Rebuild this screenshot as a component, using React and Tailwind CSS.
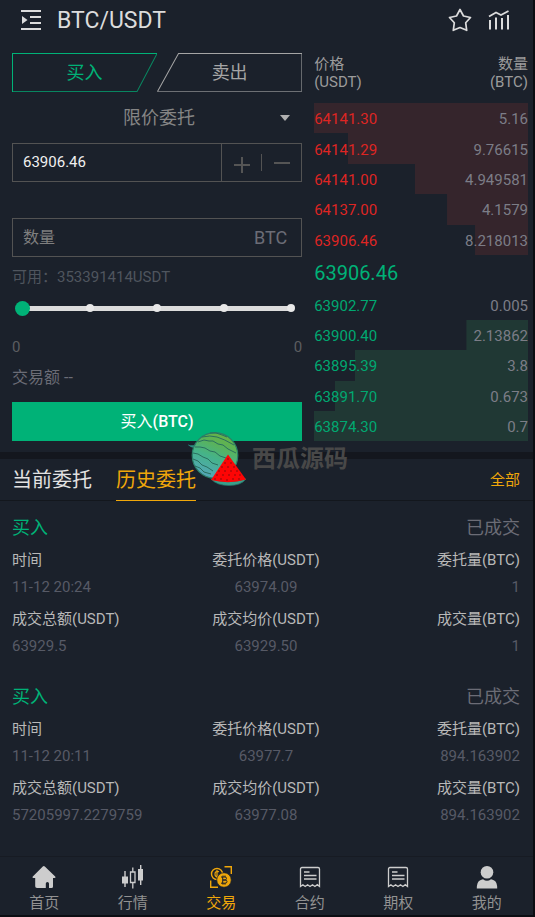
import React from "react";

const asks = [
  { price: "64141.30", amount: "5.16", depth: 100 },
  { price: "64141.29", amount: "9.76615", depth: 84 },
  { price: "64141.00", amount: "4.949581", depth: 53 },
  { price: "64137.00", amount: "4.1579", depth: 38 },
  { price: "63906.46", amount: "8.218013", depth: 25 },
];

const bids = [
  { price: "63902.77", amount: "0.005", depth: 0 },
  { price: "63900.40", amount: "2.13862", depth: 29 },
  { price: "63895.39", amount: "3.8", depth: 81 },
  { price: "63891.70", amount: "0.673", depth: 90 },
  { price: "63874.30", amount: "0.7", depth: 100 },
];

const orders = [
  {
    side: "买入",
    status: "已成交",
    fields: [
      ["时间", "11-12 20:24"],
      ["委托价格(USDT)", "63974.09"],
      ["委托量(BTC)", "1"],
      ["成交总额(USDT)", "63929.5"],
      ["成交均价(USDT)", "63929.50"],
      ["成交量(BTC)", "1"],
    ],
  },
  {
    side: "买入",
    status: "已成交",
    fields: [
      ["时间", "11-12 20:11"],
      ["委托价格(USDT)", "63977.7"],
      ["委托量(BTC)", "894.163902"],
      ["成交总额(USDT)", "57205997.2279759"],
      ["成交均价(USDT)", "63977.08"],
      ["成交量(BTC)", "894.163902"],
    ],
  },
];

const columnAlign = ["text-left", "text-center", "text-right"];

function MenuIcon() {
  return (
    <svg width="20" height="20" viewBox="0 0 20 20" fill="currentColor" aria-hidden="true">
      <path d="M0 0h20v2H0zM9 6h11v2H9zM9 12h11v2H9zM0 18h20v2H0zM1 6v8L6.500 10z" />
    </svg>
  );
}

function StarIcon() {
  return (
    <svg width="24" height="24" viewBox="0 0 24 24" fill="none" stroke="currentColor" strokeWidth="1.700" strokeLinejoin="round" aria-hidden="true">
      <path d="M12 1.500l3.500 6.500 7 1.500-4.800 5.300 1 7.500L12 19.500l-6.700 2.800 1-7.500L1.500 9.500l7-1.500z" />
    </svg>
  );
}

function ChartIcon() {
  return (
    <svg width="22" height="20" viewBox="0 0 22 20" fill="none" stroke="currentColor" aria-hidden="true">
      <path d="M1 6.500L8 2.500l5 2.500 7.500-4" strokeWidth="1.800" />
      <path d="M2 19.500V10M8 19.500V7.500M14 19.500V8M20 19.500V5" strokeWidth="2" />
    </svg>
  );
}

function HomeIcon() {
  return (
    <svg width="24" height="24" viewBox="0 0 24 24" fill="currentColor" aria-hidden="true">
      <path d="M10.800 1.500q1-.9 2 0l10.400 10q.9 1.300-.7 1.500h-1.500v8.500q0 1.500-1.500 1.500H17v-4.500q0-1.500-1.600-1.500t-1.600 1.500V23H5q-1.800 0-1.800-1.800V13H1.500q-1.600-.2-.7-1.500z" />
    </svg>
  );
}

function CandlesIcon() {
  return (
    <svg width="24" height="24" viewBox="0 0 24 24" fill="currentColor" aria-hidden="true">
      <path d="M3.300 6h1.400v5.500H7v7H4.700V22H3.300v-3.500H1v-7h2.300zM19 0h1.400v4H22v11.500h-1.600V20H19v-4.500h-2V4h2z" />
      <path d="M11.800 2.500V7M11.800 18v5.500M9.500 7h4.500v10.500H9.500z" fill="none" stroke="currentColor" strokeWidth="1.300" />
    </svg>
  );
}

function TradeIcon() {
  return (
    <svg width="24" height="24" viewBox="0 0 24 24" fill="none" stroke="currentColor" aria-hidden="true">
      <path d="M15.500 1.700h6.800V9M1.700 15.500v6.800H9" strokeWidth="1.400" />
      <circle cx="8" cy="9" r="5.500" strokeWidth="1.400" />
      <path d="M10 6.800q-4-1.300-4 2.200t3 2.200M8 5v8" strokeWidth="1.200" />
      <circle cx="15" cy="15" r="7.300" fill="currentColor" stroke="#1b212b" strokeWidth=".8" />
      <path d="M12 12h4q1.500 0 1.500 1.400T16 15h-2H16q2 0 2 1.600T16 18.200h-4M13.700 12v6.200M14 10.500v1.500M16 10.500v1.500M14 18.200v1.500M16 18.200v1.500" stroke="#1b212b" strokeWidth="1" />
    </svg>
  );
}

function ReceiptIcon() {
  return (
    <svg width="24" height="24" viewBox="0 0 24 24" fill="none" stroke="currentColor" strokeWidth="1.300" aria-hidden="true">
      <path d="M2.500 21.500V4Q2.500 2.500 4 2.500h16q1.500 0 1.500 1.500v17.500l-2.200-1.800-2.400 1.800-2.400-1.800-2.500 1.800-2.400-1.800-2.400 1.800-2.300-1.800z" />
      <path d="M6 7h5.500M6 10.500h12.500M6 14h12.500" />
    </svg>
  );
}

function UserIcon() {
  return (
    <svg width="24" height="24" viewBox="0 0 24 24" fill="currentColor" aria-hidden="true">
      <circle cx="12" cy="7.300" r="6.300" />
      <path d="M1.800 23.500q0-6.500 3-8 1.500-1 3.200-1.300 4 3 8 0 1.700.3 3.200 1.300 3 1.500 3 8z" />
    </svg>
  );
}

const navItems = [
  { label: "首页", Icon: HomeIcon },
  { label: "行情", Icon: CandlesIcon },
  { label: "交易", Icon: TradeIcon, active: true },
  { label: "合约", Icon: ReceiptIcon },
  { label: "期权", Icon: ReceiptIcon },
  { label: "我的", Icon: UserIcon },
];

function Melon() {
  return (
    <svg width="60" height="56" viewBox="0 0 60 56" aria-hidden="true">
      <defs>
        <linearGradient id="rind" x1="0.7" y1="0" x2="0.3" y2="1">
          <stop offset="0" stopColor="#6ab344" />
          <stop offset=".25" stopColor="#5cb256" />
          <stop offset=".55" stopColor="#45b389" />
          <stop offset="1" stopColor="#55a5bd" />
        </linearGradient>
      </defs>
      <path d="M-1 13q4 2 8 1l1 3q-4 1-9-4z" fill="#2b8d83" />
      <circle cx="27" cy="24.500" r="22.800" fill="url(#rind)" stroke="#2b7f68" strokeWidth="1.200" />
      <g fill="none" stroke="#2a6f5f" strokeWidth="1" strokeLinejoin="round">
        <path d="M14 6q8-2 15 0t17 8" />
        <path d="M10 11l6-2 5 1 4 0 5 3 5 1 5 4 8 4" />
        <path d="M7 16l5 0 5 1 5 3 5 1 5 4 6 2 5 4" />
        <path d="M5 22l5 1 5 3 5 2 4 4 6 2" />
        <path d="M5 28l5 2 4 4 5 2 6 4" />
        <path d="M7 35l5 2 4 4 7 2" />
        <path d="M22 2l6 0 6 2 5 2" />
      </g>
      <path d="M23 48q17 5 35 0-5 6.500-17 6.500T23 48z" fill="#39a08c" stroke="#247266" strokeWidth=".8" />
      <path d="M40 23.500L58 48.500q-17 5-35 .5z" fill="#fd0505" />
      <g fill="#5d1010">
        {[[40, 28], [37, 32], [43, 32], [34, 36], [40, 36], [46, 36], [31, 40], [37, 40], [43, 40], [49, 40], [29, 44], [35, 44], [41, 44], [47, 44], [52, 44], [27, 48], [33, 48], [39, 49], [45, 48], [51, 48]].map(
          ([x, y]) => (
            <circle key={`${x}-${y}`} cx={x} cy={y} r=".7" />
          )
        )}
      </g>
    </svg>
  );
}

function BookRows({ rows, textClass, fill }) {
  return (
    <tbody>
      {rows.map((row) => (
        <tr
          key={row.price}
          style={{ background: `linear-gradient(to left, ${fill} ${row.depth}%, transparent ${row.depth}%)` }}
        >
          <td className={`p-0 pt-[2px] ${textClass}`}>{row.price}</td>
          <td className="p-0 pt-[2px] text-right text-[#7c7d87]">{row.amount}</td>
        </tr>
      ))}
    </tbody>
  );
}

function OrderForm() {
  return (
    <form className="flex min-w-0 flex-col" onSubmit={(e) => e.preventDefault()}>
      <div className="grid h-[39px] grid-cols-2 text-lg">
        <button type="button" className="relative text-[#00b277]">
          <svg className="absolute inset-0 h-full w-full" viewBox="0 0 145 39" preserveAspectRatio="none" fill="none" stroke="currentColor" aria-hidden="true">
            <path d="M.5 39V.5H145" />
            <path d="M145 .5L125 38.500H.5" opacity=".7" />
          </svg>
          买入
        </button>
        <button type="button" className="relative text-[#a5a5a5]">
          <svg className="absolute inset-0 h-full w-full" viewBox="0 0 145 39" preserveAspectRatio="none" fill="none" stroke="currentColor" aria-hidden="true">
            <path d="M.5 38.500L21.500 .5H145" />
            <path d="M144.500 .5v38H.5" opacity=".6" />
          </svg>
          卖出
        </button>
      </div>

      <div className="grid h-[51px] items-center">
        <select
          aria-label="委托类型"
          className="col-start-1 row-start-1 w-full appearance-none bg-transparent pr-3 pl-4 text-center text-lg text-[#858585] outline-none"
        >
          <option>限价委托</option>
        </select>
        <svg className="pointer-events-none col-start-1 row-start-1 mr-3 justify-self-end text-[#b0b0b0]" width="10" height="6" viewBox="0 0 10 6" fill="currentColor" aria-hidden="true">
          <path d="M0 0h10L5 6z" />
        </svg>
      </div>

      <div className="flex h-[39px] border border-[#535353]">
        <input
          aria-label="价格"
          defaultValue="63906.46"
          className="min-w-0 flex-1 bg-transparent px-[10px] text-[15px] text-[#f0f0f0] outline-none"
        />
        <div className="flex w-20 items-center border-l border-[#535353] text-[#555]">
          <button type="button" aria-label="增加" className="flex flex-1 justify-center pt-1">
            <svg width="16" height="16" viewBox="0 0 16 16" fill="none" stroke="currentColor" strokeWidth="2">
              <path d="M0 8h16M8 0v16" />
            </svg>
          </button>
          <span className="h-[17px] w-px bg-[#535353]" />
          <button type="button" aria-label="减少" className="flex flex-1 justify-center">
            <svg width="16" height="16" viewBox="0 0 16 16" fill="none" stroke="currentColor" strokeWidth="2">
              <path d="M0 8h16" />
            </svg>
          </button>
        </div>
      </div>

      <label className="mt-9 flex h-[39px] items-center border border-[#535353] pr-[14px]">
        <input
          aria-label="数量"
          placeholder="数量"
          className="min-w-0 flex-1 bg-transparent px-[10px] text-base text-white outline-none placeholder:text-[#7f7f7f]"
        />
        <span className="text-lg text-[#6b6c76]">BTC</span>
      </label>

      <p className="mt-2 text-[15px] leading-6 text-[#4f555e]">可用：353391414USDT</p>

      <div className="mt-[10px] grid h-[18px] items-center px-[3px]">
        <div className="col-start-1 row-start-1 mx-[7px] h-[5px] bg-[#dcdcdc]" />
        <div className="col-start-1 row-start-1 mx-1 flex justify-between">
          {[0, 25, 50, 75, 100].map((stop) => (
            <span key={stop} className="size-2 rounded-full bg-[#e8e8e8]" />
          ))}
        </div>
        <input
          type="range"
          min="0"
          max="100"
          defaultValue="0"
          aria-label="仓位比例"
          className="z-10 col-start-1 row-start-1 m-0 h-[15px] w-full appearance-none bg-transparent [&::-webkit-slider-thumb]:size-[15px] [&::-webkit-slider-thumb]:appearance-none [&::-webkit-slider-thumb]:rounded-full [&::-webkit-slider-thumb]:bg-[#00b277]"
        />
      </div>

      <div className="mt-[19px] flex justify-between text-[15px] leading-[22px] text-[#5c5d60]">
        <span>0</span>
        <span>0</span>
      </div>
      <p className="mt-2 text-base leading-6 text-[#6b6c76]">交易额 --</p>
      <button type="submit" className="mt-3 h-[39px] bg-[#00b277] text-base text-white">
        买入<span className="font-medium">(BTC)</span>
      </button>
    </form>
  );
}

function OrderBook() {
  return (
    <section className="min-w-0 text-[15px] leading-[18px]">
      <table className="h-[202px] w-full border-collapse">
        <thead>
          <tr className="h-[50px] align-top text-[#9b9b9b]">
            <th className="p-0 pt-[2px] text-left font-normal">
              价格
              <br />
              (USDT)
            </th>
            <th className="p-0 pt-[2px] text-right font-normal">
              数量
              <br />
              (BTC)
            </th>
          </tr>
        </thead>
        <BookRows rows={asks} textClass="text-[#de2523]" fill="#35252c" />
      </table>
      <p className="flex h-[35px] items-center text-xl text-[#00b277]">63906.46</p>
      <table className="h-[151px] w-full border-collapse">
        <BookRows rows={bids} textClass="text-[#00a871]" fill="#203834" />
      </table>
    </section>
  );
}

export default function App() {
  return (
    <div className="relative flex min-h-screen flex-col border-r-2 border-b-2 border-[#0b0d12] bg-[#1b212b] font-['Roboto','Noto_Sans_CJK_SC',sans-serif]">
      <header className="flex h-10 items-center pr-[23px] pl-[21px] text-[#dcdcdc]">
        <button type="button" aria-label="菜单">
          <MenuIcon />
        </button>
        <h1 className="ml-4 pt-[2px] text-[23px]">BTC/USDT</h1>
        <button type="button" aria-label="收藏" className="mr-4 ml-auto">
          <StarIcon />
        </button>
        <button type="button" aria-label="图表">
          <ChartIcon />
        </button>
      </header>

      <main>
        <div className="grid grid-cols-[19fr_14fr] gap-3 border-b-[7px] border-[#14171e] pt-[13px] pr-[5px] pb-[11px] pl-3">
          <OrderForm />
          <OrderBook />
        </div>

        <div className="flex h-[42px] items-stretch gap-6 border-b border-[#13171d] pr-[13px] pl-3 text-xl">
          <button type="button" className="text-[#e2e2e2]">
            当前委托
          </button>
          <button type="button" className="-mb-px border-b border-[#f0a70a] text-[#f0a70a]">
            历史委托
          </button>
          <button type="button" className="ml-auto pt-[2px] text-[15px] text-[#f0a70a]">
            全部
          </button>
        </div>

        {orders.map((order) => (
          <article key={order.fields[0][1]} className="h-[169px] pt-3 pr-[13px] pl-3">
            <div className="flex justify-between text-lg leading-[30px]">
              <span className="text-[#00b277]">{order.side}</span>
              <span className="text-[#6b6c76]">{order.status}</span>
            </div>
            <dl className="mt-1 grid grid-cols-3 gap-y-[5px] text-[15px] leading-[27px]">
              {order.fields.map(([name, value], i) => (
                <div key={name} className={columnAlign[i % 3]}>
                  <dt className="text-[#b8b8b8]">{name}</dt>
                  <dd className="text-[#575a66]">{value}</dd>
                </div>
              ))}
            </dl>
          </article>
        ))}
      </main>

      <nav className="mt-auto grid h-[59px] grid-cols-6 border-t border-[#171b23] pr-[2px]">
        {navItems.map(({ label, Icon, active }) => (
          <a
            key={label}
            href="#"
            className={`flex flex-col items-center pt-2 text-[15px] leading-[28px] ${active ? "text-[#f0a70a]" : "text-[#929292]"}`}
          >
            <span className={active ? "h-6" : "h-6 text-[#cdcdcd]"}>
              <Icon />
            </span>
            {label}
          </a>
        ))}
      </nav>

      <div className="pointer-events-none absolute top-[431px] left-[188px] flex items-center gap-1 text-2xl font-bold text-[#484848]">
        <Melon />
        <span>西瓜源码</span>
      </div>
    </div>
  );
}
